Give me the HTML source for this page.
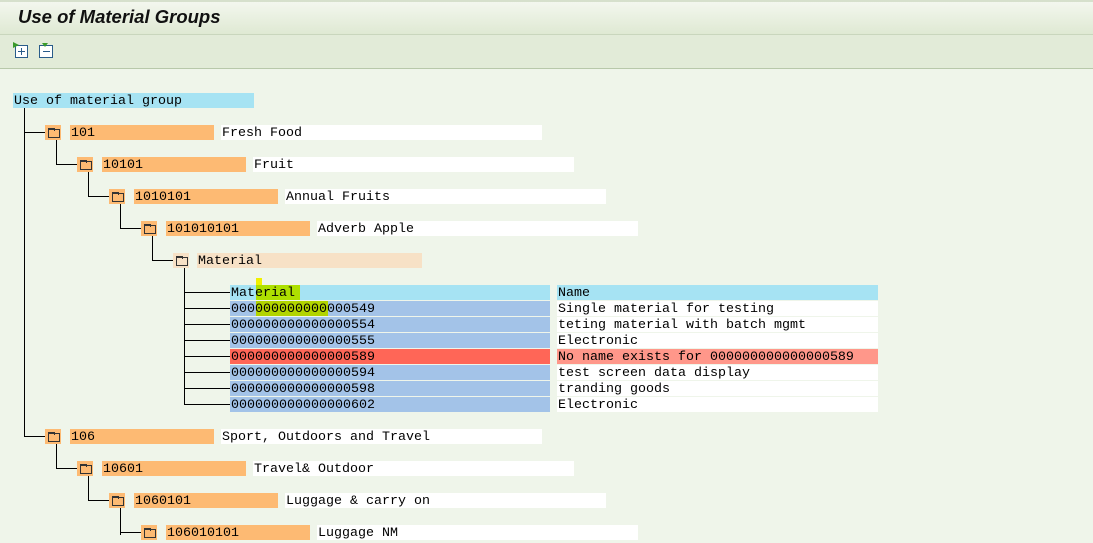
<!DOCTYPE html>
<html><head><meta charset="utf-8"><style>
*{margin:0;padding:0;box-sizing:border-box}
body{width:1093px;height:535px;overflow:hidden;background:#eff5ea;position:relative;font-family:"Liberation Mono",monospace;font-size:13.33px;color:#000}
.a{position:absolute;height:15px;line-height:18px;white-space:pre;padding-left:1px}
.c{background:#fdba73}
.w{background:#fff}
.h{background:#a6e3f3}
.m{background:#a3c3e8}
.r{background:#ff6657}
.rl{background:#ff978a}
.i{position:absolute;width:16px;height:15px;background:#fdba73}
.i::after{content:"";position:absolute;left:3px;top:4px;width:10px;height:7px;border:1px solid #333;border-top-width:1px}
.i::before{content:"";position:absolute;left:3px;top:3px;width:5px;height:2px;border:1px solid #333;border-bottom:none}
.v{position:absolute;width:1px;background:#000}
.hl{position:absolute;height:1px;background:#000}
.t{position:absolute;white-space:pre;line-height:18px;height:15px}
</style></head><body>
<div style="position:absolute;left:0;top:0;width:1093px;height:35px;background:linear-gradient(#f3f7ee,#dfe9d3);border-top:2px solid #d6e0cc;border-bottom:1px solid #c9d6bd"></div>
<div style="position:absolute;left:18px;top:6px;font-family:'Liberation Sans',sans-serif;font-weight:bold;font-style:italic;font-size:18.5px;color:#111">Use of Material Groups</div>
<div style="position:absolute;left:0;top:35px;width:1093px;height:34px;background:#e2ebd8;border-bottom:1px solid #b8c8aa"></div>
<svg style="position:absolute;left:13px;top:42px" width="18" height="18"><rect x="2.5" y="3.5" width="12" height="12" fill="#fff" stroke="#2a5c8a"/><path d="M0 0L6 3L0 6Z" fill="#3a9a2a"/><path d="M8.5 6v7M5 9.5h7" stroke="#2a5c8a"/></svg>
<svg style="position:absolute;left:38px;top:42px" width="18" height="18"><rect x="1.5" y="3.5" width="13" height="12" fill="#fff" stroke="#2a5c8a"/><path d="M4 1h6L7 5Z" fill="#3a9a2a"/><path d="M5 9.5h7" stroke="#2a5c8a"/></svg>

<div class="a h" style="left:13px;top:93px;width:241px">Use of material group</div>
<div class="v" style="left:24px;top:108px;height:329px"></div>

<div class="hl" style="left:24px;top:132px;width:21px"></div>
<div class="i" style="left:45px;top:125px"></div>
<div class="a c" style="left:70px;top:125px;width:144px">101</div>
<div class="a w" style="left:221px;top:125px;width:321px">Fresh Food</div>
<div class="v" style="left:56px;top:140px;height:25px"></div>
<div class="hl" style="left:56px;top:164px;width:21px"></div>
<div class="i" style="left:77px;top:157px"></div>
<div class="a c" style="left:102px;top:157px;width:144px">10101</div>
<div class="a w" style="left:253px;top:157px;width:321px">Fruit</div>
<div class="v" style="left:88px;top:172px;height:25px"></div>
<div class="hl" style="left:88px;top:196px;width:21px"></div>
<div class="i" style="left:109px;top:189px"></div>
<div class="a c" style="left:134px;top:189px;width:144px">1010101</div>
<div class="a w" style="left:285px;top:189px;width:321px">Annual Fruits</div>
<div class="v" style="left:120px;top:204px;height:25px"></div>
<div class="hl" style="left:120px;top:228px;width:21px"></div>
<div class="i" style="left:141px;top:221px"></div>
<div class="a c" style="left:166px;top:221px;width:144px">101010101</div>
<div class="a w" style="left:317px;top:221px;width:321px">Adverb Apple</div>
<div class="v" style="left:152px;top:236px;height:25px"></div>
<div class="hl" style="left:152px;top:260px;width:21px"></div>
<div class="i" style="left:173px;top:253px;background:#f7e1c6"></div>
<div class="a" style="left:197px;top:253px;width:225px;background:#f7e1c6">Material</div>
<div class="v" style="left:184px;top:268px;height:137px"></div>

<div class="hl" style="left:184px;top:292px;width:46px"></div>
<div class="hl" style="left:184px;top:308px;width:46px"></div>
<div class="hl" style="left:184px;top:324px;width:46px"></div>
<div class="hl" style="left:184px;top:340px;width:46px"></div>
<div class="hl" style="left:184px;top:356px;width:46px"></div>
<div class="hl" style="left:184px;top:372px;width:46px"></div>
<div class="hl" style="left:184px;top:388px;width:46px"></div>
<div class="hl" style="left:184px;top:404px;width:46px"></div>

<div class="a h" style="left:230px;top:285px;width:320px"></div>
<div class="a m" style="left:230px;top:301px;width:320px"></div>
<div style="position:absolute;left:256px;top:278px;width:6px;height:7px;background:#f0f000"></div>
<div style="position:absolute;left:256px;top:285px;width:44px;height:15px;background:#aee000"></div>
<div style="position:absolute;left:256px;top:301px;width:72px;height:15px;background:#b2d400"></div>
<div class="t" style="left:231px;top:285px">Material</div>
<div class="t" style="left:231px;top:301px">000000000000000549</div>
<div class="a h" style="left:557px;top:285px;width:321px">Name</div>
<div class="a w" style="left:557px;top:301px;width:321px">Single material for testing</div>
<div class="a m" style="left:230px;top:317px;width:320px">000000000000000554</div>
<div class="a w" style="left:557px;top:317px;width:321px">teting material with batch mgmt</div>
<div class="a m" style="left:230px;top:333px;width:320px">000000000000000555</div>
<div class="a w" style="left:557px;top:333px;width:321px">Electronic</div>
<div class="a r" style="left:230px;top:349px;width:320px">000000000000000589</div>
<div class="a rl" style="left:557px;top:349px;width:321px">No name exists for 000000000000000589</div>
<div class="a m" style="left:230px;top:365px;width:320px">000000000000000594</div>
<div class="a w" style="left:557px;top:365px;width:321px">test screen data display</div>
<div class="a m" style="left:230px;top:381px;width:320px">000000000000000598</div>
<div class="a w" style="left:557px;top:381px;width:321px">tranding goods</div>
<div class="a m" style="left:230px;top:397px;width:320px">000000000000000602</div>
<div class="a w" style="left:557px;top:397px;width:321px">Electronic</div>

<div class="hl" style="left:24px;top:436px;width:21px"></div>
<div class="i" style="left:45px;top:429px"></div>
<div class="a c" style="left:70px;top:429px;width:144px">106</div>
<div class="a w" style="left:221px;top:429px;width:321px">Sport, Outdoors and Travel</div>
<div class="v" style="left:56px;top:444px;height:25px"></div>
<div class="hl" style="left:56px;top:468px;width:21px"></div>
<div class="i" style="left:77px;top:461px"></div>
<div class="a c" style="left:102px;top:461px;width:144px">10601</div>
<div class="a w" style="left:253px;top:461px;width:321px">Travel&amp; Outdoor</div>
<div class="v" style="left:88px;top:476px;height:25px"></div>
<div class="hl" style="left:88px;top:500px;width:21px"></div>
<div class="i" style="left:109px;top:493px"></div>
<div class="a c" style="left:134px;top:493px;width:144px">1060101</div>
<div class="a w" style="left:285px;top:493px;width:321px">Luggage &amp; carry on</div>
<div class="v" style="left:120px;top:508px;height:27px"></div>
<div class="hl" style="left:120px;top:532px;width:21px"></div>
<div class="i" style="left:141px;top:525px"></div>
<div class="a c" style="left:166px;top:525px;width:144px">106010101</div>
<div class="a w" style="left:317px;top:525px;width:321px">Luggage NM</div>
</body></html>
